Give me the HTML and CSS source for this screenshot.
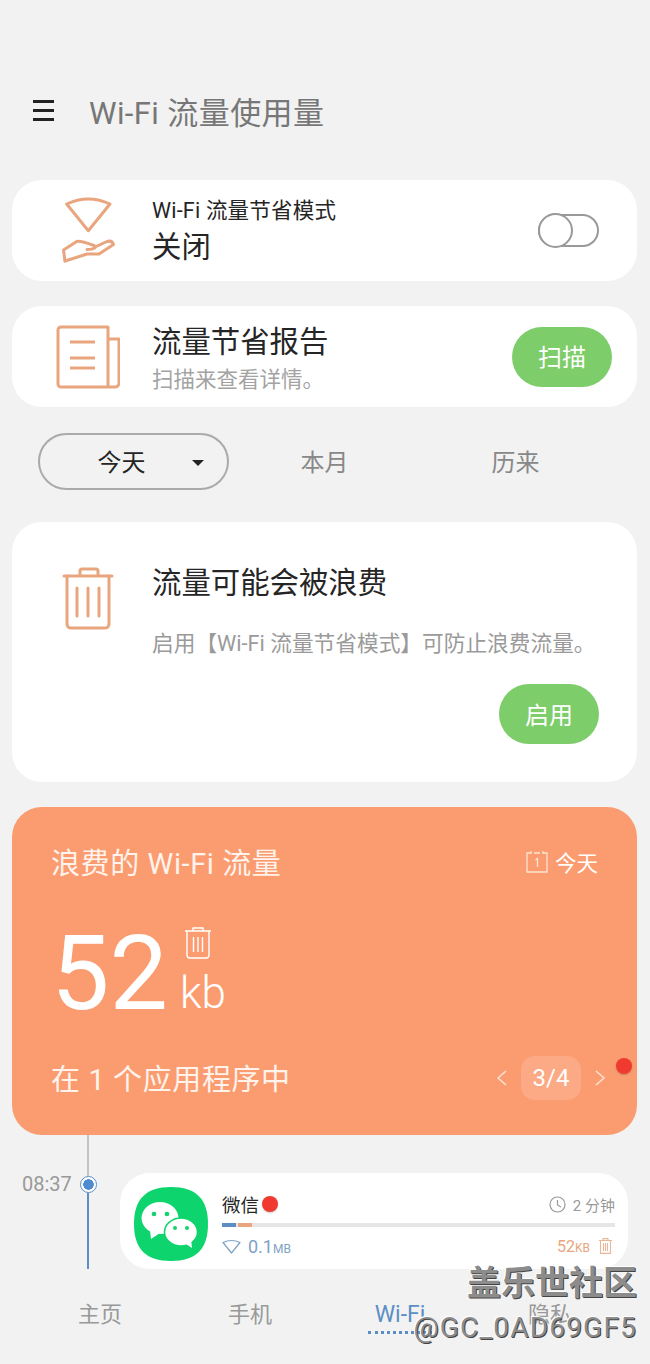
FILE: index.html
```html
<!DOCTYPE html>
<html lang="zh">
<head>
    <meta charset="UTF-8">
    <meta name="viewport" content="width=device-width, initial-scale=1.0">
    <title>Wi-Fi 流量使用量</title>
    <link rel="stylesheet" href="styles.css">
</head>
<body>
    <div class="page">
        <header class="topbar">
            <div class="burger"><span></span><span></span><span></span></div>
            <h1 class="page-title">Wi-Fi 流量使用量</h1>
        </header>

        <section class="card row-card">
            <svg class="card-icon" width="64" height="70" viewBox="-4 0 64 70" fill="none" stroke="#e8a57e" stroke-width="3" stroke-linejoin="round" stroke-linecap="round">
                <path d="M6.7 8Q28.3 -2 50 8L28.3 34.7Z"/>
                <path d="M5 65L3.500 54L16.700 45.500Q20 44.500 34 49.500Q38 53 27 53.500"/>
                <path d="M5 65L27 58H39L53.500 48.500Q52 44 47 45.500L35 51"/>
            </svg>
            <div class="row-text mode-text">
                <div class="label">Wi-Fi 流量节省模式</div>
                <div class="heading off-state">关闭</div>
            </div>
            <div class="toggle"><span class="knob"></span></div>
        </section>

        <section class="card row-card">
            <svg class="card-icon" width="64" height="64" viewBox="0 0 64 64" fill="none" stroke="#e8a57e" stroke-width="3" stroke-linejoin="round">
                <path d="M52 14V2H5A3 3 0 0 0 2 5V59A3 3 0 0 0 5 62H59A4 4 0 0 0 63 58V14H52V62"/>
                <path d="M14 17H39M14 33H39M14 43H39"/>
            </svg>
            <div class="row-text report-text">
                <div class="heading">流量节省报告</div>
                <div class="sub">扫描来查看详情。</div>
            </div>
            <button class="green-btn scan-btn">扫描</button>
        </section>

        <nav class="ranges">
            <div class="range range-on">今天<span class="caret"></span></div>
            <div class="range">本月</div>
            <div class="range">历来</div>
        </nav>

        <section class="card waste-card">
            <svg class="waste-icon" width="52" height="64" viewBox="0 0 52 64" fill="none" stroke="#e8a57e" stroke-width="3" stroke-linejoin="round" stroke-linecap="round">
                <path d="M2 10H50M18 10V5A2 2 0 0 1 20 3H34A2 2 0 0 1 36 5V10"/>
                <path d="M5 10V58A4 4 0 0 0 9 62H43A4 4 0 0 0 47 58V10"/>
                <path d="M15 22V50M26 22V50M37 22V50"/>
            </svg>
            <div class="waste-body">
                <div class="heading">流量可能会被浪费</div>
                <p class="desc">启用【Wi-Fi 流量节省模式】可防止浪费流量。</p>
                <button class="green-btn enable-btn">启用</button>
            </div>
        </section>

        <section class="summary">
            <div class="summary-top">
                <div class="summary-title">浪费的 Wi-Fi 流量</div>
                <div class="summary-date">
                    <svg width="24" height="24" viewBox="0 0 24 24" fill="none" stroke="#fde3d4" stroke-width="1.300">
                        <path d="M6 3H2V22H22V3H18M9 3H15"/>
                        <path d="M6 1V4M18 1V4"/>
                        <path d="M10.500 10L12.500 8.500V17"/>
                    </svg>
                    今天
                </div>
            </div>
            <div class="amount">
                <span class="amount-num">52</span>
                <div class="amount-side">
                    <svg width="28" height="33" viewBox="0 0 28 33" fill="none" stroke="#fff" stroke-width="1.400" stroke-linejoin="round">
                        <path d="M1 5H27M9 5V2H19V5"/>
                        <path d="M3 5V29A3 3 0 0 0 6 32H22A3 3 0 0 0 25 29V5"/>
                        <path d="M9.500 11V26M14 11V26M18.500 11V26"/>
                    </svg>
                    <span class="amount-unit">kb</span>
                </div>
            </div>
            <div class="summary-bottom">
                <div class="summary-title">在 1 个应用程序中</div>
                <div class="pager">
                    <svg width="12" height="18" viewBox="0 0 12 18" fill="none" stroke="#fde3d4" stroke-width="1.500"><path d="M10 2L2 9L10 16"/></svg>
                    <span class="pager-num">3/4</span>
                    <svg width="12" height="18" viewBox="0 0 12 18" fill="none" stroke="#fde3d4" stroke-width="1.500"><path d="M2 2L10 9L2 16"/></svg>
                </div>
            </div>
            <span class="red-dot summary-dot"></span>
        </section>

        <section class="timeline">
            <div class="time">08:37</div>
            <div class="axis">
                <span class="axis-top"></span>
                <span class="axis-dot"></span>
                <span class="axis-bottom"></span>
            </div>
            <div class="app-card">
                <svg class="app-icon" width="74" height="74" viewBox="0 0 74 74">
                    <path d="M37 0C62 0 74 12 74 37C74 62 62 74 37 74C12 74 0 62 0 37C0 12 12 0 37 0Z" fill="#0dd46d"/>
                    <ellipse cx="26" cy="31" rx="18.500" ry="16" fill="#fff"/>
                    <path d="M16 43L17 52L26 46Z" fill="#fff"/>
                    <ellipse cx="47" cy="45" rx="16.500" ry="14" fill="#fff" stroke="#0dd46d" stroke-width="1.500"/>
                    <path d="M52 57L58 61L57 52Z" fill="#fff"/>
                    <circle cx="20" cy="27" r="2.300" fill="#0dd46d"/>
                    <circle cx="33" cy="27" r="2.300" fill="#0dd46d"/>
                    <circle cx="41" cy="41" r="2" fill="#0dd46d"/>
                    <circle cx="53" cy="41" r="2" fill="#0dd46d"/>
                </svg>
                <div class="app-info">
                    <div class="app-head">
                        <div class="app-name">微信<span class="red-dot name-dot"></span></div>
                        <div class="app-time">
                            <svg width="17" height="17" viewBox="0 0 17 17" fill="none" stroke="#999" stroke-width="1.200"><circle cx="8.500" cy="8.500" r="7.500"/><path d="M8.500 4V9L12 11"/></svg>
                            2 分钟
                        </div>
                    </div>
                    <div class="app-bar"><span class="bar-blue"></span><span class="bar-orange"></span></div>
                    <div class="app-foot">
                        <div class="app-wifi">
                            <svg width="19" height="15" viewBox="0 0 19 15" fill="none" stroke="#7ea3c4" stroke-width="1.200" stroke-linejoin="round"><path d="M1 3.500Q9.500 -0.500 18 3.500L9.500 14Z"/></svg>
                            <span class="val-blue">0.1<small>MB</small></span>
                        </div>
                        <div class="app-waste">
                            <span>52<small>KB</small></span>
                            <svg width="13" height="16" viewBox="0 0 13 16" fill="none" stroke="#eab699" stroke-width="1.100"><path d="M0 2.500H13M4 2.500V.6H9V2.500M1.500 2.500V15.400H11.500V2.500M4.500 5V13M6.500 5V13M8.500 5V13"/></svg>
                        </div>
                    </div>
                </div>
            </div>
        </section>

        <nav class="bottom-nav">
            <div class="nav-item">主页</div>
            <div class="nav-item">手机</div>
            <div class="nav-item nav-on">Wi-Fi</div>
            <div class="nav-item">隐私</div>
        </nav>

        <div class="watermark">
            <div class="wm-big">盖乐世社区</div>
            <div class="wm-small">@GC_0AD69GF5</div>
        </div>
    </div>
</body>
</html>
```

FILE: styles.css
```css
* {
    box-sizing: border-box;
}
html, body {
    margin: 0;
    padding: 0;
}
body {
    background-color: #f2f2f2;
    font-family: Roboto, "Noto Sans CJK SC", sans-serif;
    color: #252525;
}
.page {
    position: relative;
    width: 650px;
    height: 1364px;
    overflow: hidden;
    padding: 0 13px 0 12px;
}

/* top bar */
.topbar {
    display: flex;
    align-items: center;
    height: 44px;
    margin-top: 90px;
    margin-bottom: 46px;
    padding-left: 21px;
}
.burger {
    width: 21px;
    display: flex;
    flex-direction: column;
    gap: 6px;
    margin-top: -3px;
    margin-right: 35px;
}
.burger span {
    display: block;
    height: 3px;
    background-color: #222;
}
.page-title {
    margin: -4px 0 0;
    font-size: 31px;
    font-weight: 400;
    letter-spacing: 0.4px;
    color: #777;
    white-space: nowrap;
}

/* cards */
.card {
    background-color: #fff;
    border-radius: 30px;
}
.row-card {
    display: flex;
    align-items: center;
    height: 101px;
    margin-bottom: 25px;
}
.card-icon {
    flex: none;
    margin: 0 32px 0 44px;
}
.row-text {
    flex: 1;
}
.mode-text {
    padding-top: 3px;
}
.report-text {
    padding-top: 4px;
}
.label {
    font-size: 21.500px;
    letter-spacing: 0.2px;
    line-height: 28px;
}
.heading {
    font-size: 29.400px;
    line-height: 40px;
}
.off-state {
    line-height: 42px;
    margin-top: 1px;
}
.sub {
    font-size: 21.500px;
    line-height: 30px;
    margin-top: 3px;
    color: #a3a3a3;
}
.toggle {
    position: relative;
    width: 61px;
    height: 33px;
    margin-right: 38px;
    border: 2px solid #999;
    border-radius: 17px;
}
.knob {
    position: absolute;
    left: -2px;
    top: -2px;
    width: 35px;
    height: 35px;
    margin-top: -1px;
    border: 2px solid #999;
    border-radius: 50%;
    background-color: #fff;
}
.green-btn {
    border: 0;
    border-radius: 30px;
    width: 100px;
    height: 60px;
    background-color: #7dcd6a;
    color: #fff;
    font-family: inherit;
    font-size: 24px;
    padding: 0 0 2px;
}
.scan-btn {
    margin-right: 25px;
}

/* range tabs */
.ranges {
    display: grid;
    grid-template-columns: repeat(3, 191px);
    height: 57px;
    margin: 26px 0 32px 26px;
    font-size: 24px;
    color: #888;
}
.range {
    display: flex;
    align-items: center;
    justify-content: center;
    padding-bottom: 2px;
}
.range-on {
    position: relative;
    border: 2px solid #aaa;
    border-radius: 29px;
    color: #252525;
    padding-right: 24px;
}
.caret {
    position: absolute;
    left: 152px;
    top: 25px;
    border-left: 6px solid transparent;
    border-right: 6px solid transparent;
    border-top: 6px solid #222;
}

/* waste card */
.waste-card {
    display: flex;
    height: 260px;
    margin-bottom: 25px;
}
.waste-icon {
    flex: none;
    margin: 44px 38px 0 50px;
}
.waste-body {
    flex: 1;
    padding-top: 41px;
    padding-right: 38px;
}
.desc {
    margin: 26px 0 25px;
    font-size: 21.700px;
    line-height: 30px;
    color: #9a9a9a;
    white-space: nowrap;
}
.enable-btn {
    display: block;
    margin-left: auto;
}

/* orange summary */
.summary {
    position: relative;
    height: 328px;
    padding: 37px 39px 0;
    border-radius: 30px;
    background-color: #fb9c70;
    color: #fff;
}
.summary-top, .summary-bottom {
    display: flex;
    align-items: center;
    justify-content: space-between;
}
.summary-title {
    font-size: 29px;
    letter-spacing: 0.6px;
    line-height: 40px;
    color: #fff3ec;
    white-space: nowrap;
}
.summary-date {
    display: flex;
    align-items: center;
    gap: 6px;
    margin-bottom: 5px;
    font-size: 21.500px;
}
.amount {
    display: flex;
    height: 120px;
    margin-top: 30px;
    margin-bottom: 26px;
}
.amount-num {
    font-size: 104px;
    line-height: 120px;
    margin-right: 12px;
}
.amount-side {
    display: flex;
    flex-direction: column;
    align-items: flex-start;
    padding-top: 12px;
}
.amount-side svg {
    margin-left: 4px;
}
.amount-unit {
    font-size: 44px;
    font-weight: 300;
    line-height: 52px;
    margin-top: 8px;
}
.pager {
    display: flex;
    align-items: center;
    gap: 13px;
    margin-top: -4px;
    margin-right: -8px;
}
.pager-num {
    width: 60px;
    height: 44px;
    border-radius: 14px;
    background-color: rgba(255, 255, 255, 0.15);
    font-size: 24px;
    line-height: 44px;
    text-align: center;
}
.red-dot {
    display: inline-block;
    width: 16px;
    height: 16px;
    border-radius: 50%;
    background-color: #f03a30;
    box-shadow: 0 1px 2px rgba(0, 0, 0, 0.2);
}
.summary-dot {
    position: absolute;
    left: 604px;
    top: 251px;
}

/* timeline */
.timeline {
    display: flex;
    height: 134px;
}
.time {
    width: 61px;
    margin-left: 10px;
    padding-top: 37px;
    font-size: 20px;
    line-height: 24px;
    color: #999;
}
.axis {
    width: 16px;
    margin-left: -3px;
    display: flex;
    flex-direction: column;
    align-items: center;
    height: 134px;
}
.axis-top {
    width: 2px;
    height: 41px;
    background-color: #c4c4c4;
}
.axis-bottom {
    flex: 1;
    width: 2px;
    background-color: #5b8fc4;
}
.axis-dot {
    flex: none;
    width: 17px;
    height: 17px;
    border: 1px solid #5b8fc4;
    border-radius: 50%;
    background: radial-gradient(circle, #4f8bd0 0 5px, #fff 5.500px);
}
.app-card {
    display: flex;
    align-items: flex-start;
    width: 508px;
    height: 96px;
    margin-top: 38px;
    margin-left: 24px;
    padding: 14px 13px 0 14px;
    border-radius: 30px;
    background-color: #fff;
}
.app-icon {
    flex: none;
    margin-right: 14px;
}
.app-info {
    flex: 1;
    padding-top: 2px;
}
.app-head, .app-foot {
    display: flex;
    align-items: center;
    justify-content: space-between;
}
.app-head {
    height: 30px;
}
.app-name {
    position: relative;
    font-size: 18.500px;
}
.name-dot {
    position: absolute;
    left: 40px;
    top: 5px;
}
.app-time {
    display: flex;
    align-items: center;
    gap: 7px;
    font-size: 15px;
    color: #999;
}
.app-bar {
    display: flex;
    gap: 2px;
    height: 4px;
    margin-top: 4px;
    background-color: #e6e6e6;
}
.bar-blue {
    width: 14px;
    background-color: #5b8fc4;
}
.bar-orange {
    width: 14px;
    background-color: #e8a57e;
}
.app-foot {
    height: 26px;
    margin-top: 6px;
}
.app-wifi {
    display: flex;
    align-items: center;
    gap: 7px;
    color: #7ea3c4;
    font-size: 18px;
}
small {
    font-size: 12px;
}
.app-waste {
    display: flex;
    align-items: center;
    gap: 9px;
    margin-right: 3px;
    color: #e8a57e;
    font-size: 16px;
}

/* bottom tabs */
.bottom-nav {
    display: grid;
    grid-template-columns: repeat(4, 150px);
    margin: 30px 0 0 13px;
    font-size: 22px;
    line-height: 32px;
    color: #999;
    text-align: center;
}
.nav-on {
    position: relative;
    font-size: 23px;
    color: #5b8fc4;
}
.nav-on::after {
    content: "";
    position: absolute;
    left: 43px;
    top: 32px;
    width: 64px;
    border-top: 3px dotted #5b8fc4;
}

/* forum watermark */
.watermark {
    position: absolute;
    right: 13px;
    top: 1262px;
    text-align: right;
    color: #8c8c8c;
    white-space: nowrap;
    text-shadow: 1px 1px 0 #444, -1px -1px 0 #fff;
}
.wm-big {
    font-size: 34px;
    font-weight: 700;
    line-height: 42px;
}
.wm-small {
    font-size: 28px;
    letter-spacing: 1.200px;
    line-height: 40px;
    margin-top: 4px;
}
```
